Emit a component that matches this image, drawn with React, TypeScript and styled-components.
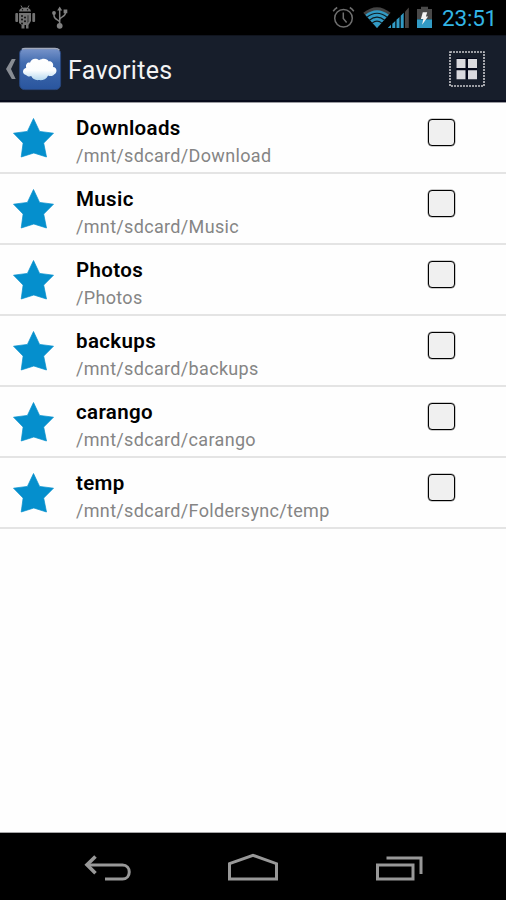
import React from "react";
import styled, { createGlobalStyle } from "styled-components";

const GlobalStyle = createGlobalStyle`
  html, body { margin: 0; padding: 0; background: #fff; }
  * { box-sizing: border-box; }
  svg { display: block; flex: none; }
`;

const Screen = styled.div`
  width: 506px;
  height: 900px;
  display: flex;
  flex-direction: column;
  overflow: hidden;
  background: #fefefe;
  font-family: Roboto, sans-serif;
`;

const StatusBar = styled.header`
  height: 35px;
  flex: none;
  display: flex;
  align-items: flex-start;
  padding-right: 9px;
  background: #000;
`;

const Clock = styled.time`
  width: 55px;
  margin-left: 9px;
  padding-top: 4px;
  font-size: 22.5px;
  line-height: 29px;
  letter-spacing: -0.2px;
  white-space: nowrap;
  color: #33b5e5;
`;

const Spacer = styled.div`
  flex: 1;
`;

const ActionBar = styled.div`
  height: 68px;
  flex: none;
  display: flex;
  align-items: center;
  padding: 0 21px 0 5px;
  background: #171e2b;
  border-top: 1px solid #10141e;
  border-bottom: 1px solid #9b9ba1;
  box-shadow: inset 0 -2px 0 #080b1c;
`;

const Title = styled.h1`
  margin: 0 0 0 6px;
  padding-top: 3px;
  font-size: 25px;
  font-weight: 400;
  line-height: 32px;
  letter-spacing: 0.28px;
  color: #f3f3f3;
`;

const GridButton = styled.button`
  width: 36px;
  height: 36px;
  padding: 0;
  border: 0;
  background: none;
`;

const List = styled.ul`
  flex: 1;
  margin: 0;
  padding: 0;
  list-style: none;
`;

const Row = styled.li`
  height: 71px;
  display: flex;
  padding-left: 13px;
  border-bottom: 2px solid #e4e4e4;
`;

const StarIcon = styled.svg`
  margin-top: 14px;
`;

const Labels = styled.div`
  width: 352px;
  margin-left: 22px;
  padding-top: 11px;
`;

const Name = styled.div`
  font-size: 20.5px;
  font-weight: 600;
  line-height: 28px;
  letter-spacing: 0.35px;
  color: #000;
`;

const Path = styled.div`
  font-size: 18px;
  line-height: 28px;
  letter-spacing: 0.33px;
  color: #858585;
  white-space: nowrap;
`;

const CheckBox = styled.span`
  width: 27px;
  height: 27px;
  margin-top: 16px;
  border: 1px solid #000;
  border-radius: 4px;
  background: #f0f0f0;
  box-shadow: 0 0 0 0.5px #0006;
`;

const NavBar = styled.nav`
  height: 68px;
  flex: none;
  background: #000;
  border-top: 1px solid #a6a6a8;
  display: flex;
  align-items: flex-start;
  padding: 20px 0 0 84px;
`;

const NavButton = styled.span<{ $gap?: number }>`
  margin-left: ${(p) => p.$gap ?? 0}px;
`;

const favorites = [
  { name: "Downloads", path: "/mnt/sdcard/Download" },
  { name: "Music", path: "/mnt/sdcard/Music" },
  { name: "Photos", path: "/Photos" },
  { name: "backups", path: "/mnt/sdcard/backups" },
  { name: "carango", path: "/mnt/sdcard/carango" },
  { name: "temp", path: "/mnt/sdcard/Foldersync/temp" },
];

const NotificationIcons = () => (
  <svg width="80" height="35" viewBox="0 0 80 35">
    <g fill="#737373">
      <path d="M19 11.5C19.3 8.7 21.5 7.4 25 7.4s5.7 1.3 6 4.1z" />
      <path d="M21 5.5l1.6 3M29 5.5l-1.6 3" stroke="#737373" />
      <rect x="15.3" y="13" width="2.8" height="9" rx="1" />
      <rect x="32.3" y="13" width="2.8" height="9" rx="1" />
      <path d="M19 13h12v8l-2.5 4v3.6H26V25h-1.5v3.6H21.5V25L19 23z" />
    </g>
    <g fill="#111">
      <circle cx="22.5" cy="9.8" r=".7" /><circle cx="27.5" cy="9.8" r=".7" />
      <circle cx="22" cy="16" r="1" /><circle cx="25" cy="17.5" r="1" />
      <circle cx="22" cy="19.5" r="1" /><circle cx="25" cy="21.2" r="1" />
      <circle cx="22" cy="23.4" r="1" />
      <path d="M27 15.2h2v6l-2 2z" opacity=".35" />
    </g>
    <g stroke="#808080" strokeWidth="1.5" fill="none">
      <path d="M59.7 26V9.5M59.7 22.5c0-3-5.7-2.5-5.7-7v-2M59.7 19.8c0-3.5 5.8-2.5 5.8-7" />
    </g>
    <g fill="#808080">
      <circle cx="59.7" cy="25.8" r="2.9" />
      <path d="M57.2 10.5h5L59.7 6.5z" />
      <circle cx="54" cy="13" r="1.9" />
      <path d="M63.6 9.5h3.7v3.7h-3.7z" />
    </g>
  </svg>
);

const SystemIcons = () => (
  <svg width="103" height="35" viewBox="330 0 103 35">
    <g fill="none" stroke="#6f6f6f" strokeWidth="1.5">
      <circle cx="343.5" cy="18.2" r="8.8" />
      <path d="M343.3 12.5v6l3.3 4M333.2 11.2a13 13 0 0 1 4-3.7M353.8 11.2a13 13 0 0 0-4-3.7" />
    </g>
    <path d="M363.3 12.8Q377 1.5 390.6 12.8L377 28z" fill="#444" />
    <path d="M365.3 14.8Q377 5.5 388.8 14.8L377 28z" fill="#329bc5" />
    <g fill="none" stroke="#101c22" strokeWidth="1.1">
      <path d="M366.8 17.3Q377 9.3 387.2 17.3M369.3 20.3Q377 14 384.7 20.3M372 23.2Q377 19 382 23.2" />
    </g>
    <path d="M388 28h3v-3.2l-3 3zM392.3 23.8v4.2h3v-7zM396.5 19.8v8.2h3v-11zM400.7 15.8v12.2h3v-15.2z" fill="#329bc5" />
    <path d="M405 11.7v16.3h3.8V7.5z" fill="#484442" />
    <path d="M417 9h4V6.8h7V9h4v10.3h-15z" fill="#494949" />
    <path d="M417 19.3h15V28h-15z" fill="#329bc5" />
    <path d="M422.8 12.3h4.4l-1.3 4.1h2.2l-6 8.4 1.2-5.8h-2.4z" fill="#f4f4f4" />
  </svg>
);

const CloudLogo = () => (
  <svg width="57" height="44" viewBox="5 47 57 44">
    <defs>
      <linearGradient id="tile" x2="0" y2="1">
        <stop stopColor="#7894ca" /><stop offset=".35" stopColor="#426caf" />
        <stop offset="1" stopColor="#29559e" />
      </linearGradient>
      <linearGradient id="cloud" x2="0" y2="1">
        <stop stopColor="#fff" /><stop offset=".55" stopColor="#fbfdfe" />
        <stop offset="1" stopColor="#b5d8ef" />
      </linearGradient>
    </defs>
    <path d="M11.8 59h3.9l-4.7 10 4.7 10h-3.9L6 69z" fill="#888c93" />
    <rect x="19.6" y="48.6" width="41" height="41" rx="5" fill="url(#tile)" stroke="#28467c" strokeWidth="1" />
    <path d="M22 49.4q1-.8 3-.8h30q3 0 4.4 1.6" fill="none" stroke="#a2aabc" strokeWidth="1.5" />
    <path d="M26 75c-3.8-.3-4.2-6 .2-7.2-1-3.7 1.5-5.8 3.8-5.1 1.3-4.2 6-5 9-2.4 3.6-2.4 8-2 9.8 1.1 3-.4 5.2 2.5 4.2 5.6 4.3.3 4.6 6 1.1 7.5-1.4 1.6-4.2 2-6 .9-1.7 4-6.2 5.3-9.1 4.7-3.2.6-6.5-.8-7.8-4-2 .9-4.2.2-5.2-1.1z" fill="url(#cloud)" />
  </svg>
);

const GridIcon = () => (
  <svg width="36" height="36" viewBox="0 0 36 36">
    <rect x="1" y="1" width="34" height="34" fill="none" stroke="#c8c8cc" strokeWidth="1.6" strokeDasharray="2 1" />
    <path d="M7 7h21v21H7z" fill="#05091a" />
    <path d="M7.5 8h9v9h-9zM19 8h9v9h-9zM7.5 19.2h9v9h-9zM19 19.2h9v9h-9z" fill="#dadade" />
  </svg>
);

const Star = () => (
  <StarIcon width="41" height="42" viewBox="0 0 41 42">
    <path d="M20.5 1.5L26.6 14.4 40.5 16.2 30.7 26.1 33.5 40 20.8 36 8.2 40 10.1 26.1.5 16.2 14.4 14.4z" fill="#058fcd" stroke="#058fcd" strokeWidth=".7" strokeLinejoin="round" />
  </StarIcon>
);

export default function App() {
  return (
    <>
      <GlobalStyle />
      <Screen>
        <StatusBar>
          <NotificationIcons />
          <Spacer />
          <SystemIcons />
          <Clock>23:51</Clock>
        </StatusBar>
        <ActionBar>
          <CloudLogo />
          <Title>Favorites</Title>
          <Spacer />
          <GridButton aria-label="Grid view"><GridIcon /></GridButton>
        </ActionBar>
        <List>
          {favorites.map((f) => (
            <Row key={f.name}>
              <Star />
              <Labels>
                <Name>{f.name}</Name>
                <Path>{f.path}</Path>
              </Labels>
              <CheckBox role="checkbox" aria-checked="false" />
            </Row>
          ))}
        </List>
        <NavBar>
          <NavButton>
            <svg width="48" height="30" viewBox="84 853 48 30" fill="none" stroke="#989898" strokeWidth="3">
              <path d="M88 865h34.5c9 0 9 14 0 14H105" />
              <path d="M95.5 856.5l-8.5 8.3 8.5 8.4" strokeWidth="3.6" />
            </svg>
          </NavButton>
          <NavButton $gap={96}>
            <svg width="50" height="30" viewBox="228 853 50 30" fill="none" stroke="#989898" strokeWidth="3">
              <path d="M229.5 863.7L253 855.3l23.5 8.4V879h-47z" />
            </svg>
          </NavButton>
          <NavButton $gap={98}>
            <svg width="48" height="30" viewBox="376 853 48 30" fill="none" stroke="#989898" strokeWidth="3">
              <path d="M377.5 865h35.5v14h-35.5zM386.5 858h34.5v16" />
            </svg>
          </NavButton>
        </NavBar>
      </Screen>
    </>
  );
}
